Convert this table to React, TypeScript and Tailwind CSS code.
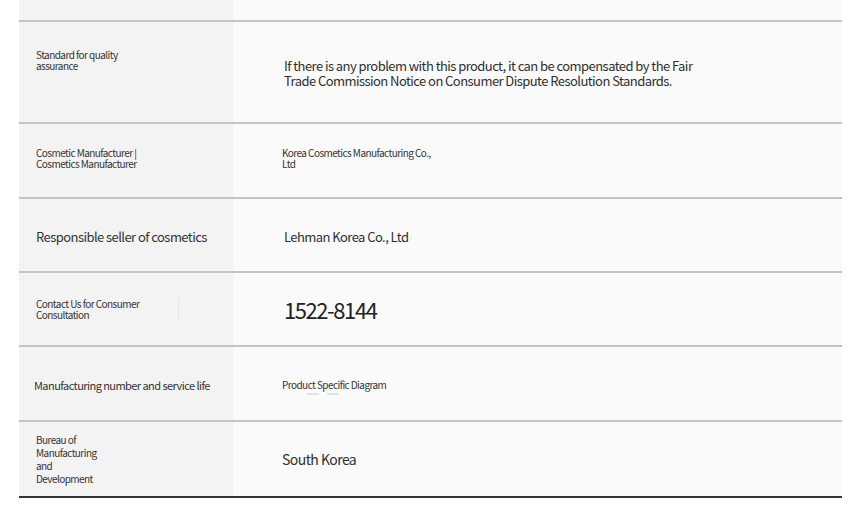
const font = { fontFamily: '"Noto Sans CJK KR", "Noto Sans", sans-serif', letterSpacing: '-0.035em' }

type Row = {
  h: string
  label: React.ReactNode
  value: React.ReactNode
  labelPad?: string
}

const rows: Row[] = [
  {
    h: 'h-[100px]',
    labelPad: 'pl-[17px] pb-[24px]',
    label: <p className="w-[110px] text-[10px] leading-[11px]">Standard for quality assurance</p>,
    value: (
      <p className="w-[470px] pl-[51px] pt-[2px] text-[13px] leading-[15px] text-[#2f2f2f]">
        If there is any problem with this product, it can be compensated by the Fair Trade Commission Notice on Consumer Dispute Resolution Standards.
      </p>
    ),
  },
  {
    h: 'h-[73px]',
    labelPad: 'pl-[17px] pb-[5px]',
    label: <p className="w-[118px] text-[10px] leading-[11px]">Cosmetic Manufacturer | Cosmetics Manufacturer</p>,
    value: (
      <p className="w-[203px] pb-[5px] pl-[49px] text-[10px] leading-[11px] text-[#333]">
        Korea Cosmetics Manufacturing Co., Ltd
      </p>
    ),
  },
  {
    h: 'h-[72px]',
    label: <p className="pt-[4px] text-[13px] leading-[16px]">Responsible seller of cosmetics</p>,
    value: (
      <p className="pl-[51px] pt-[4px] text-[13px] leading-[16px] text-[#2f2f2f]">
        Lehman Korea Co., Ltd<span className="ml-[1px] align-top text-[7px] text-[#ccc]">›</span>
      </p>
    ),
  },
  {
    h: 'h-[72px]',
    label: (
      <div className="flex items-center">
        <p className="w-[118px] text-[10px] leading-[11px]">Contact Us for Consumer Consultation</p>
        <div className="ml-[24px] h-[22px] w-px bg-[#e6e6e6]" />
      </div>
    ),
    value: <p className="pl-[51px] text-[22px] leading-[26px] tracking-[-0.065em] text-[#222]">1522-8144</p>,
  },
  {
    h: 'h-[73px]',
    labelPad: 'pl-[15px] pt-[3px]',
    label: <p className="text-[11px] leading-[14px]">Manufacturing number and service life</p>,
    value: (
      <div className="pl-[49px] pt-[6px]">
        <p className="text-[10px] leading-[12px] text-[#333]">Product Specific Diagram</p>
        <div className="mt-[2px] flex gap-[8px] pl-[25px]">
          <div className="h-[2px] w-[12px] bg-[#e2e2e2]" />
          <div className="h-[2px] w-[12px] bg-[#e2e2e2]" />
        </div>
      </div>
    ),
  },
  {
    h: 'h-[74px]',
    label: <p className="w-[70px] text-[10px] leading-[13px]">Bureau of Manufacturing and Development</p>,
    value: <p className="pl-[49px] text-[14px] leading-[18px] text-[#2f2f2f]">South Korea</p>,
  },
]

export default function App() {
  return (
    <div className="h-[520px] w-[860px] bg-white text-[#333]" style={font}>
      <div className="ml-[19px] w-[823px]">
        <div className="flex h-[22px] border-b-2 border-[#c4c4c4]">
          <div className="w-[214px] bg-[#f3f3f3]" />
          <div className="flex-1 bg-[#fafafa]" />
        </div>
        {rows.map((r, i) => (
          <div
            key={i}
            className={`flex ${r.h} box-content border-b-2 ${
              i === rows.length - 1 ? 'border-[#353535]' : 'border-[#c4c4c4]'
            }`}
          >
            <div className={`flex w-[214px] items-center bg-[#f3f3f3] ${r.labelPad ?? 'pl-[17px]'}`}>
              {r.label}
            </div>
            <div className="flex flex-1 items-center bg-[#fafafa]">{r.value}</div>
          </div>
        ))}
      </div>
    </div>
  )
}
